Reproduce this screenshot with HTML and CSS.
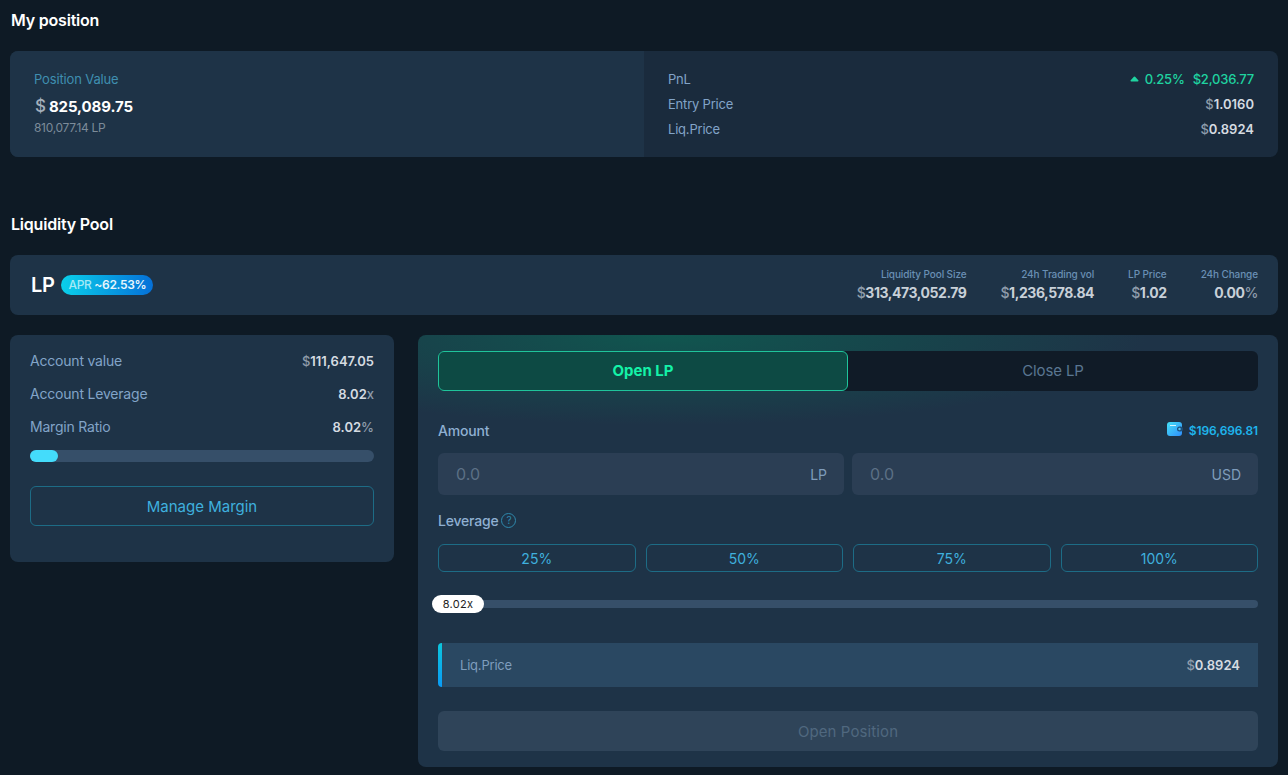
FILE: index.html
```html
<!DOCTYPE html>
<html lang="en">
<head>
    <meta charset="UTF-8">
    <meta name="viewport" content="width=device-width, initial-scale=1.0">
    <title>My position</title>
    <link rel="stylesheet" href="styles.css">
</head>
<body>
    <h2 class="section-title first">My position</h2>

    <div class="position-card">
        <div class="position-left">
            <div class="position-label">Position Value</div>
            <div class="position-value"><span class="unit">$</span><span>825,089.75</span></div>
            <div class="position-sub">810,077.14 LP</div>
        </div>
        <div class="position-right">
            <div class="row">
                <span class="row-label">PnL</span>
                <span class="pnl">
                    <svg class="caret" width="9" height="6" viewBox="0 0 9 6"><path d="M4.500 .5C5 .5 5.300 .8 5.600 1.200L8.300 4.300C8.800 4.900 8.500 5.500 7.800 5.500H1.200C.5 5.500 .2 4.900 .7 4.300L3.400 1.200C3.700 .8 4 .5 4.500 .5z" fill="#1fd3a0"/></svg>
                    <span>0.25%</span>
                    <span>$2,036.77</span>
                </span>
            </div>
            <div class="row">
                <span class="row-label">Entry Price</span>
                <span class="num"><span class="unit">$</span>1.0160</span>
            </div>
            <div class="row">
                <span class="row-label">Liq.Price</span>
                <span class="num"><span class="unit">$</span>0.8924</span>
            </div>
        </div>
    </div>

    <h2 class="section-title">Liquidity Pool</h2>

    <div class="pool-bar">
        <div class="pool-name">
            <span class="pool-lp">LP</span>
            <span class="apr"><span class="apr-label">APR</span> ~62.53%</span>
        </div>
        <div class="pool-stats">
            <div class="stat">
                <div class="stat-label">Liquidity Pool Size</div>
                <div class="stat-value"><span class="unit">$</span>313,473,052.79</div>
            </div>
            <div class="stat">
                <div class="stat-label">24h Trading vol</div>
                <div class="stat-value"><span class="unit">$</span>1,236,578.84</div>
            </div>
            <div class="stat">
                <div class="stat-label">LP Price</div>
                <div class="stat-value"><span class="unit">$</span>1.02</div>
            </div>
            <div class="stat">
                <div class="stat-label">24h Change</div>
                <div class="stat-value">0.00<span class="unit">%</span></div>
            </div>
        </div>
    </div>

    <div class="columns">
        <div class="account">
            <div class="account-row">
                <span class="row-label">Account value</span>
                <span class="num"><span class="unit">$</span>111,647.05</span>
            </div>
            <div class="account-row">
                <span class="row-label">Account Leverage</span>
                <span class="num">8.02<span class="unit">x</span></span>
            </div>
            <div class="account-row">
                <span class="row-label">Margin Ratio</span>
                <span class="num">8.02<span class="unit">%</span></span>
            </div>
            <div class="margin-track"><div class="margin-fill"></div></div>
            <div class="manage-btn">Manage Margin</div>
        </div>

        <div class="trade">
            <div class="tabs">
                <div class="tab active">Open LP</div>
                <div class="tab">Close LP</div>
            </div>

            <div class="amount-head">
                <span class="field-label">Amount</span>
                <span class="balance">
                    <svg class="wallet-icon" width="16" height="14" viewBox="0 0 16 14">
                        <defs>
                            <linearGradient id="wallet" x1="0" y1="0" x2="1" y2="1">
                                <stop offset="0" stop-color="#45e0f5"/>
                                <stop offset="1" stop-color="#2f8dfb"/>
                            </linearGradient>
                        </defs>
                        <rect x="0" y="0" width="15" height="14" rx="3" fill="url(#wallet)"/>
                        <path d="M3 3.500H9" stroke="#d8f6fd" stroke-width="1" fill="none"/>
                        <rect x="10" y="4.500" width="6" height="5" rx="2.500" fill="#1d4f7c"/>
                        <circle cx="12.500" cy="7" r="1.200" fill="#5cc8f5"/>
                    </svg>
                    $196,696.81
                </span>
            </div>

            <div class="inputs">
                <div class="input-box"><span class="placeholder">0.0</span><span class="input-unit">LP</span></div>
                <div class="input-box"><span class="placeholder">0.0</span><span class="input-unit">USD</span></div>
            </div>

            <div class="leverage-head">
                <span class="field-label">Leverage</span>
                <span class="help">?</span>
            </div>

            <div class="percents">
                <div class="percent">25%</div>
                <div class="percent">50%</div>
                <div class="percent">75%</div>
                <div class="percent">100%</div>
            </div>

            <div class="slider">
                <div class="slider-track"></div>
                <div class="slider-thumb">8.02x</div>
            </div>

            <div class="liq-box">
                <span class="liq-label">Liq.Price</span>
                <span class="num"><span class="unit">$</span>0.8924</span>
            </div>

            <div class="open-btn">Open Position</div>
        </div>
    </div>
</body>
</html>
```

FILE: styles.css
```css
* {
    box-sizing: border-box;
}
html, body {
    height: 775px;
    overflow: hidden;
}
body {
    font-family: Inter, "Noto Sans", sans-serif;
    margin: 0;
    padding: 0 10px;
    background-color: #0e1a25;
    color: #e8edf2;
    font-size: 14px;
}
.section-title {
    margin: 0;
    padding: 56px 0 0 1px;
    height: 98px;
    font-size: 16px;
    line-height: 22px;
    font-weight: 600;
    letter-spacing: -0.2px;
    color: #fff;
}
.section-title.first {
    padding-top: 9px;
    height: 51px;
}
.unit {
    color: #8e9cab;
    font-weight: 500;
}
.num {
    font-weight: 600;
    font-size: 13px;
    color: #d5dbe1;
}
.row-label {
    color: #82a4c8;
    font-size: 13px;
    letter-spacing: -0.2px;
}

/* position card */
.position-card {
    display: flex;
    height: 106px;
    border-radius: 8px;
    overflow: hidden;
    background-color: #1a2b3d;
}
.position-left {
    width: 634px;
    padding: 19px 24px;
    background-color: #1e3347;
}
.position-label {
    color: #3f8fb0;
    font-size: 13px;
    line-height: 18px;
    letter-spacing: -0.15px;
}
.position-value {
    display: flex;
    align-items: baseline;
    gap: 3px;
    margin-top: 7px;
    padding-left: 1px;
    font-size: 15px;
    line-height: 22px;
    font-weight: 700;
    letter-spacing: -0.1px;
    color: #fff;
}
.position-value .unit {
    font-size: 17px;
    color: #a3afbb;
}
.position-sub {
    margin-top: 2px;
    font-size: 12px;
    line-height: 15px;
    letter-spacing: -0.3px;
    color: #7c8b99;
}
.position-right {
    flex: 1;
    padding: 15px 24px 0;
}
.row {
    display: flex;
    justify-content: space-between;
    align-items: center;
    height: 25px;
}
.pnl {
    display: flex;
    align-items: center;
    gap: 8px;
    color: #1fd3a0;
    font-size: 13px;
    font-weight: 500;
    letter-spacing: -0.2px;
}
.caret {
    margin-right: -2px;
}

/* pool bar */
.pool-bar {
    display: flex;
    justify-content: space-between;
    align-items: center;
    height: 60px;
    padding: 0 20px 0 21px;
    border-radius: 8px;
    background-color: #1e3347;
}
.pool-name {
    display: flex;
    align-items: center;
    gap: 7px;
}
.pool-lp {
    font-size: 20px;
    font-weight: 600;
    letter-spacing: -0.4px;
    color: #fff;
}
.apr {
    padding: 0 7px;
    height: 20px;
    line-height: 20px;
    border-radius: 10px;
    font-size: 12px;
    font-weight: 600;
    letter-spacing: -0.3px;
    color: #e8f6fc;
    background: linear-gradient(90deg, #0ad0ea, #0570d8);
    white-space: nowrap;
}
.apr-label {
    font-weight: 500;
    color: #a5e9f5;
}
.pool-stats {
    display: flex;
    gap: 34px;
    text-align: right;
}
.stat-label {
    font-size: 10px;
    line-height: 14px;
    font-weight: 500;
    letter-spacing: -0.1px;
    color: #6a90b5;
}
.stat-value {
    margin-top: 2px;
    font-size: 14px;
    line-height: 20px;
    font-weight: 700;
    letter-spacing: -0.45px;
    color: #c8d0d8;
}

/* columns */
.columns {
    display: flex;
    gap: 24px;
    align-items: flex-start;
    margin-top: 20px;
}
.account {
    width: 384px;
    height: 227px;
    padding: 9px 20px;
    border-radius: 8px;
    background-color: #1e3347;
}
.account-row {
    display: flex;
    justify-content: space-between;
    align-items: center;
    height: 33px;
}
.account .row-label {
    font-size: 14px;
}
.margin-track {
    height: 12px;
    margin-top: 7px;
    border-radius: 6px;
    background-color: #364f69;
}
.margin-fill {
    width: 28px;
    height: 12px;
    border-radius: 6px;
    background-color: #44dcfb;
}
.manage-btn {
    height: 40px;
    margin-top: 24px;
    line-height: 40px;
    text-align: center;
    font-size: 15px;
    color: #3fb0de;
    border: 1px solid #1d6c86;
    border-radius: 6px;
}

/* trade panel */
.trade {
    width: 860px;
    height: 432px;
    padding: 16px 20px;
    border-radius: 8px;
    background: radial-gradient(ellipse 480px 90px at 250px 0, #10564f 0, rgba(16, 86, 79, 0) 100%), #1e3347;
}
.tabs {
    display: flex;
    height: 40px;
    border-radius: 6px;
    background-color: #101b27;
}
.tab {
    flex: 1;
    line-height: 40px;
    text-align: center;
    font-size: 15px;
    font-weight: 400;
    letter-spacing: -0.1px;
    color: #5a7691;
}
.tab.active {
    flex: 0 0 410px;
    line-height: 38px;
    letter-spacing: 0;
    color: #14f2a8;
    font-weight: 700;
    background-color: #0d4a44;
    border: 1px solid #1fc49b;
    border-radius: 6px;
}
.amount-head {
    display: flex;
    justify-content: space-between;
    align-items: center;
    height: 20px;
    margin-top: 29px;
}
.field-label {
    color: #8fb0d2;
    font-size: 14px;
    font-weight: 500;
    letter-spacing: -0.2px;
}
.balance {
    display: flex;
    align-items: center;
    gap: 6px;
    color: #1fb4ec;
    font-size: 12px;
    font-weight: 600;
    letter-spacing: -0.1px;
}
.wallet-icon {
    margin-top: -2px;
}
.inputs {
    display: flex;
    gap: 8px;
    margin-top: 13px;
}
.input-box {
    flex: 1;
    display: flex;
    justify-content: space-between;
    align-items: center;
    height: 42px;
    padding: 0 17px 0 18px;
    border-radius: 6px;
    background-color: #2b3e54;
}
.placeholder {
    font-size: 16px;
    color: #5c7085;
}
.input-unit {
    font-size: 14px;
    color: #7f9cbb;
}
.leverage-head {
    display: flex;
    align-items: center;
    gap: 3px;
    height: 20px;
    margin-top: 15px;
}
.help {
    width: 15px;
    height: 15px;
    line-height: 13px;
    text-align: center;
    font-size: 10px;
    color: #2f89ad;
    border: 1px solid #2f89ad;
    border-radius: 50%;
}
.percents {
    display: grid;
    grid-template-columns: repeat(4, 1fr);
    gap: 10px;
    margin-top: 14px;
}
.percent {
    height: 28px;
    line-height: 27px;
    text-align: center;
    font-size: 14px;
    color: #3fb0de;
    border: 1px solid #1d6c86;
    border-radius: 6px;
}
.slider {
    position: relative;
    height: 18px;
    margin-top: 23px;
}
.slider-track {
    height: 8px;
    position: absolute;
    left: 0;
    right: 0;
    top: 5px;
    border-radius: 4px;
    background-color: #364f69;
}
.slider-thumb {
    position: absolute;
    left: -6px;
    top: 0;
    width: 52px;
    height: 18px;
    line-height: 18px;
    text-align: center;
    font-size: 11px;
    letter-spacing: 0.3px;
    color: #222;
    background-color: #fff;
    border-radius: 9px;
}
.liq-box {
    display: flex;
    justify-content: space-between;
    align-items: center;
    height: 44px;
    margin-top: 30px;
    padding: 0 18px 0 22px;
    border-radius: 4px 0 0 4px;
    background: linear-gradient(#0cc6dc, #0a9bf5) left / 4px 100% no-repeat, #2a4862;
}
.liq-label {
    font-size: 13px;
    line-height: 16px;
    margin-top: -1px;
    color: #7f9dbd;
    letter-spacing: -0.2px;
}
.open-btn {
    height: 40px;
    margin-top: 24px;
    line-height: 42px;
    text-align: center;
    font-size: 15px;
    letter-spacing: 0.1px;
    color: #50687f;
    border-radius: 6px;
    background-color: #2f4459;
}
```
